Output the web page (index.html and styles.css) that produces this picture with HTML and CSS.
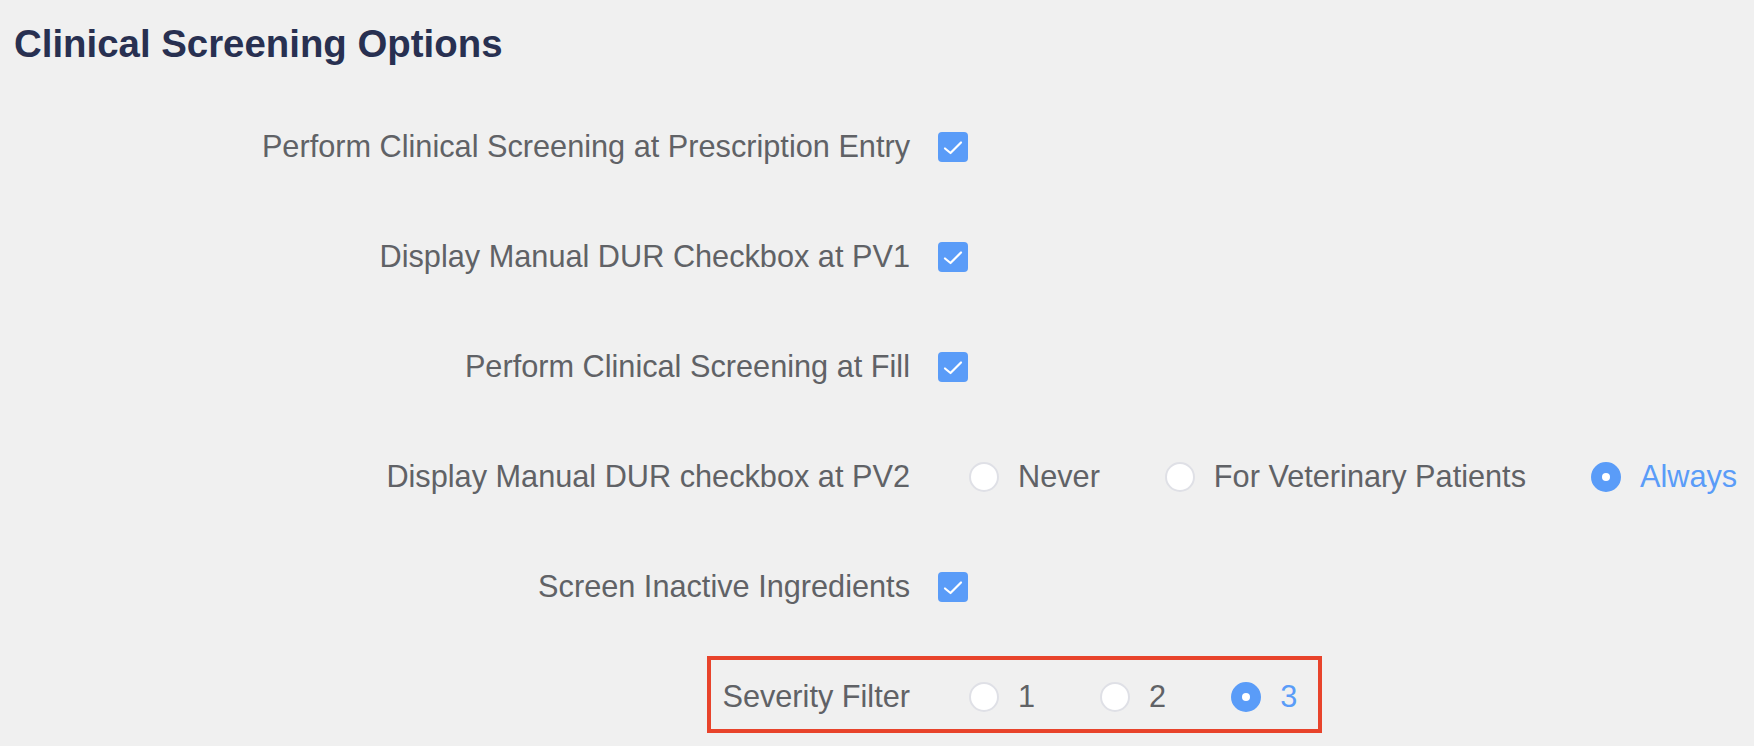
FILE: index.html
```html
<!DOCTYPE html>
<html lang="en">
<head>
<meta charset="utf-8">
<title>Clinical Screening Options</title>
<link rel="stylesheet" href="styles.css">
</head>
<body>
<div class="page">
  <h1 class="title">Clinical Screening Options</h1>
  <div class="options">
    <div class="row">
      <div class="label">Perform Clinical Screening at Prescription Entry</div>
      <div class="control">
        <span class="checkbox"><svg viewBox="0 0 30 30" width="30" height="30"><polyline points="7,16.5 12.5,21 23,10.5"/></svg></span>
      </div>
    </div>
    <div class="row">
      <div class="label">Display Manual DUR Checkbox at PV1</div>
      <div class="control">
        <span class="checkbox"><svg viewBox="0 0 30 30" width="30" height="30"><polyline points="7,16.5 12.5,21 23,10.5"/></svg></span>
      </div>
    </div>
    <div class="row">
      <div class="label">Perform Clinical Screening at Fill</div>
      <div class="control">
        <span class="checkbox"><svg viewBox="0 0 30 30" width="30" height="30"><polyline points="7,16.5 12.5,21 23,10.5"/></svg></span>
      </div>
    </div>
    <div class="row">
      <div class="label">Display Manual DUR checkbox at PV2</div>
      <div class="control radios">
        <label class="radio"><span class="dot"></span><span class="rtext">Never</span></label>
        <label class="radio"><span class="dot"></span><span class="rtext">For Veterinary Patients</span></label>
        <label class="radio checked"><span class="dot"></span><span class="rtext">Always</span></label>
      </div>
    </div>
    <div class="row">
      <div class="label">Screen Inactive Ingredients</div>
      <div class="control">
        <span class="checkbox"><svg viewBox="0 0 30 30" width="30" height="30"><polyline points="7,16.5 12.5,21 23,10.5"/></svg></span>
      </div>
    </div>
    <div class="row highlighted">
      <div class="label">Severity Filter</div>
      <div class="control radios">
        <label class="radio"><span class="dot"></span><span class="rtext">1</span></label>
        <label class="radio"><span class="dot"></span><span class="rtext">2</span></label>
        <label class="radio checked"><span class="dot"></span><span class="rtext">3</span></label>
      </div>
    </div>
  </div>
</div>
</body>
</html>
```

FILE: styles.css
```css
html, body {
  margin: 0;
  padding: 0;
  background: #f0f0f0;
}

body {
  font-family: "Liberation Sans", Arial, sans-serif;
  width: 1754px;
  height: 746px;
  overflow: hidden;
}

.page {
  padding: 22px 0 0 14px;
}

.title {
  margin: 0;
  font-size: 38.4px;
  line-height: 44px;
  font-weight: 700;
  color: #283051;
}

.options {
  margin-top: 60px;
  display: flex;
  flex-direction: column;
  gap: 70px;
}

.row {
  position: relative;
  display: grid;
  grid-template-columns: 896px auto;
  column-gap: 28px;
  height: 40px;
  align-items: center;
}

.label {
  text-align: right;
  font-size: 30.7px;
  line-height: 40px;
  padding-top: 1px;
  color: #606266;
  white-space: nowrap;
}

.control {
  display: flex;
  align-items: center;
}

.checkbox {
  display: flex;
  width: 30px;
  height: 30px;
  border-radius: 4px;
  background: #5a9cf8;
}

.checkbox polyline {
  fill: none;
  stroke: #ffffff;
  stroke-width: 2.2;
  stroke-linecap: round;
  stroke-linejoin: round;
}

.radios {
  padding-left: 31px;
  gap: 65px;
}

.radio {
  display: flex;
  align-items: center;
  gap: 19px;
}

.dot {
  box-sizing: border-box;
  width: 30px;
  height: 30px;
  border-radius: 50%;
  background: #ffffff;
  border: 2px solid #dfe0e6;
  display: flex;
  align-items: center;
  justify-content: center;
}

.rtext {
  font-size: 30.7px;
  line-height: 40px;
  padding-top: 1px;
  color: #606266;
  white-space: nowrap;
}

.radio.checked .dot {
  background: #5a9cf8;
  border-color: #5a9cf8;
}

.radio.checked .dot::after {
  content: "";
  width: 8px;
  height: 8px;
  border-radius: 50%;
  background: #ffffff;
}

.radio.checked .rtext {
  color: #5a9cf8;
}

.highlighted::after {
  content: "";
  position: absolute;
  left: 693px;
  top: -20px;
  width: 615px;
  height: 77px;
  box-sizing: border-box;
  border: 4px solid #e8432b;
  pointer-events: none;
}
```
